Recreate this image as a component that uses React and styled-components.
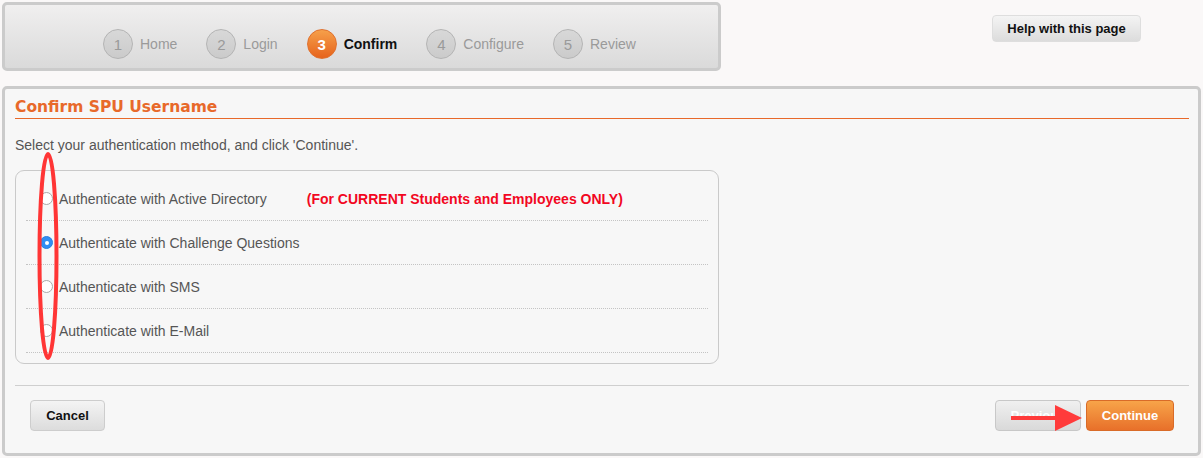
import React, { useState } from "react";
import styled, { createGlobalStyle } from "styled-components";

const Global = createGlobalStyle`
  html, body { margin: 0; padding: 0; background: #faf8f8; }
  body { font-family: "Liberation Sans", Arial, Helvetica, sans-serif; font-size: 14px; color: #555; }
  * { box-sizing: border-box; }
`;

const Page = styled.div`
  padding: 2px 2px 0 2px;
  width: 1203px;
`;

const TopRow = styled.div`
  display: flex;
  align-items: flex-start;
`;

const StepBar = styled.div`
  width: 719px;
  height: 69px;
  border: 3px solid #cbcbcb;
  border-radius: 5px;
  background: linear-gradient(#f0efef, #dadada);
  display: flex;
  align-items: flex-start;
  padding: 24px 0 0 98px;
`;

const Step = styled.div`
  display: flex;
  align-items: center;
  margin-right: 29px;
`;

const Circle = styled.span`
  width: 30px;
  height: 30px;
  border-radius: 50%;
  display: inline-flex;
  align-items: center;
  justify-content: center;
  font-size: 15px;
  margin-right: 7px;
  ${(p) =>
    p.$active
      ? `
    background: linear-gradient(#f6a04a, #e6631c);
    border: 1px solid #e0712f;
    color: #fff;
    font-weight: bold;
  `
      : `
    background: linear-gradient(#d8d8d8, #cbcbcb);
    border: 1px solid #b4b4b4;
    color: #9a9a9a;
  `}
`;

const StepLabel = styled.span`
  font-size: 14px;
  color: ${(p) => (p.$active ? "#111" : "#9a9a9a")};
  font-weight: ${(p) => (p.$active ? "bold" : "normal")};
`;

const Button = styled.button`
  font-family: "Liberation Sans", Arial, sans-serif;
  font-size: 13px;
  font-weight: bold;
  height: ${(p) => p.$h || 31}px;
  width: ${(p) => p.$w}px;
  border-radius: 4px;
  padding: 0;
  cursor: pointer;
  ${(p) =>
    p.$variant === "primary"
      ? `
    background: linear-gradient(#f7a449, #e8702a);
    border: 1px solid #d96b28;
    color: #fff;
  `
      : p.$variant === "disabled"
      ? `
    background: linear-gradient(#f0f0f0, #d9d9d9);
    border: 1px solid #c8c8c8;
    color: #fff;
  `
      : `
    background: linear-gradient(#f4f4f4, #dcdcdc);
    border: 1px solid #cdcdcd;
    color: #111;
  `}
`;

const HelpButton = styled(Button)`
  margin: 13px 0 0 271px;
  border-color: #dedede;
`;

const Panel = styled.div`
  position: relative;
  margin-top: 15px;
  width: 1199px;
  height: 370px;
  border: 3px solid #cbcbcb;
  border-radius: 5px;
  background: #f7f7f7;
  padding: 8px 9px 0 10px;
`;

const Title = styled.h1`
  margin: 0;
  font-family: "DejaVu Sans", Verdana, sans-serif;
  font-size: 15.5px;
  line-height: 20px;
  font-weight: bold;
  color: #e8692a;
  border-bottom: 1px solid #e8692a;
  padding-bottom: 1px;
`;

const Intro = styled.p`
  margin: 18px 0 0 0;
  line-height: 16px;
  color: #555;
`;

const OptionBox = styled.div`
  margin-top: 17px;
  width: 704px;
  border: 1px solid #cacaca;
  border-radius: 9px;
  padding: 6px 10px 10px 10px;
`;

const OptionRow = styled.label`
  display: flex;
  align-items: center;
  height: 44px;
  border-bottom: 1px dotted #c4c4c4;
  padding-left: 14px;
  cursor: pointer;
  color: #555;
`;

const Radio = styled.span`
  width: 13px;
  height: 13px;
  border-radius: 50%;
  margin-right: 6px;
  flex: none;
  display: inline-flex;
  align-items: center;
  justify-content: center;
  ${(p) =>
    p.$checked
      ? `
    background: #2f8ef3;
    border: 1px solid #2a7fe0;
    &::after { content: ""; width: 4px; height: 4px; border-radius: 50%; background: #fff; }
  `
      : `
    background: #fff;
    border: 1px solid #a9a9a9;
  `}
`;

const Warning = styled.span`
  margin-left: 40px;
  color: #f2071f;
  font-weight: bold;
`;

const Rule = styled.div`
  margin-top: 21px;
  border-top: 1px solid #cfcfcf;
  width: 1174px;
`;

const Actions = styled.div`
  display: flex;
  align-items: center;
  margin-top: 14px;
  padding: 0 15px 0 15px;
`;

const Spacer = styled.div`
  flex: 1;
`;

const ButtonGroup = styled.div`
  display: flex;
  gap: 5px;
`;

const Ellipse = styled.svg`
  position: absolute;
  left: 31px;
  top: 61px;
  pointer-events: none;
`;

const Arrow = styled.svg`
  position: absolute;
  left: 998px;
  top: 313px;
  pointer-events: none;
`;

const steps = ["Home", "Login", "Confirm", "Configure", "Review"];
const options = [
  "Authenticate with Active Directory",
  "Authenticate with Challenge Questions",
  "Authenticate with SMS",
  "Authenticate with E-Mail",
];

export default function App() {
  const [sel, setSel] = useState(1);
  return (
    <Page>
      <Global />
      <TopRow>
        <StepBar>
          {steps.map((s, i) => (
            <Step key={s}>
              <Circle $active={i === 2}>{i + 1}</Circle>
              <StepLabel $active={i === 2}>{s}</StepLabel>
            </Step>
          ))}
        </StepBar>
        <HelpButton $w={149} $h={27}>Help with this page</HelpButton>
      </TopRow>
      <Panel>
        <Title>Confirm SPU Username</Title>
        <Intro>Select your authentication method, and click 'Continue'.</Intro>
        <OptionBox>
          {options.map((o, i) => (
            <OptionRow key={o} onClick={() => setSel(i)}>
              <Radio $checked={sel === i} />
              {o}
              {i === 0 && <Warning>(For CURRENT Students and Employees ONLY)</Warning>}
            </OptionRow>
          ))}
        </OptionBox>
        <Rule />
        <Actions>
          <Button $w={75}>Cancel</Button>
          <Spacer />
          <ButtonGroup>
            <Button $w={86} $variant="disabled">Previous</Button>
            <Button $w={88} $variant="primary">Continue</Button>
          </ButtonGroup>
        </Actions>
        <Ellipse width="24" height="212" viewBox="0 0 24 212">
          <ellipse cx="12" cy="106" rx="8.5" ry="102" fill="none" stroke="#ff3535" strokeWidth="4" />
        </Ellipse>
        <Arrow width="82" height="32" viewBox="0 0 82 32">
          <line x1="8" y1="16" x2="54" y2="16" stroke="#ff3b3b" strokeWidth="4" />
          <polygon points="52,3 79,16 52,29" fill="#ff3b3b" />
        </Arrow>
      </Panel>
    </Page>
  );
}
